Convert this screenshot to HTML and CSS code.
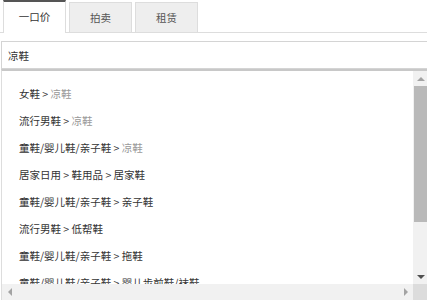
FILE: index.html
```html
<!DOCTYPE html>
<html lang="zh-CN">
<head>
    <meta charset="UTF-8">
    <meta name="viewport" content="width=device-width, initial-scale=1.0">
    <title>商品类目搜索</title>
    <link rel="stylesheet" href="styles.css">
</head>
<body>
    <!-- Sale type tabs -->
    <div class="tabs">
        <div class="tab active">一口价</div>
        <div class="tab">拍卖</div>
        <div class="tab">租赁</div>
    </div>

    <!-- Search box with suggestion list -->
    <div class="search">
        <input type="text" class="search-input" value="凉鞋">
        <div class="suggest-box">
            <ul class="suggest">
                <li>女鞋 &gt; <span class="hit">凉鞋</span></li>
                <li>流行男鞋 &gt; <span class="hit">凉鞋</span></li>
                <li>童鞋/婴儿鞋/亲子鞋 &gt; <span class="hit">凉鞋</span></li>
                <li>居家日用 &gt; 鞋用品 &gt; 居家鞋</li>
                <li>童鞋/婴儿鞋/亲子鞋 &gt; 亲子鞋</li>
                <li>流行男鞋 &gt; 低帮鞋</li>
                <li>童鞋/婴儿鞋/亲子鞋 &gt; 拖鞋</li>
                <li>童鞋/婴儿鞋/亲子鞋 &gt; 婴儿步前鞋/袜鞋</li>
                <li>女鞋 &gt; 拖鞋</li>
                <li>运动鞋new &gt; 运动凉鞋</li>
            </ul>
            <!-- fake scrollbars -->
            <div class="vbar">
                <div class="arrow up"></div>
                <div class="track"><div class="thumb"></div></div>
                <div class="arrow down"></div>
            </div>
            <div class="hbar">
                <div class="arrow left"></div>
                <div class="arrow right"></div>
            </div>
            <div class="corner"></div>
        </div>
    </div>
</body>
</html>
```
FILE: styles.css
```css
/* Page base */
body {
    margin: 0;
    font-family: "Noto Sans CJK SC", "Liberation Sans", sans-serif;
    font-size: 10.5px;
    color: #333;
    background: #fff;
    overflow: hidden;
}

.tabs {
    display: flex;
    padding-left: 3px;
    border-bottom: 1px solid #ddd;
    height: 32px;
}

.tab {
    width: 61px;
    margin-right: 3px;
    margin-top: 2px;
    border: 1px solid #ddd;
    border-bottom: none;
    background: #eee;
    color: #555;
    text-align: center;
    line-height: 29px;
}

.tab.active {
    margin-top: 0;
    border-top: 2px solid #555;
    background: #fff;
    color: #333;
    height: 31px;
    margin-bottom: -1px;
}

.search {
    margin-top: 8px;
    margin-left: 1px;
    width: 430px;
}

.search-input {
    display: block;
    box-sizing: border-box;
    width: 100%;
    height: 28px;
    margin: 0;
    padding: 0 6px;
    border: 1px solid #d4d4d4;
    font-family: inherit;
    font-size: 10.5px;
    color: #333;
    outline: none;
}

.suggest-box {
    display: grid;
    grid-template-columns: 411px 15px;
    grid-template-rows: 213px 17px;
    border-left: 1px solid #ddd;
    border-top: 2px solid #c8c8c8;
}

.suggest {
    list-style: none;
    margin: 0;
    padding: 9px 0 0 0;
    overflow: hidden;
}

.suggest li {
    padding-left: 17px;
    height: 27px;
    line-height: 27px;
    white-space: nowrap;
}

.hit {
    color: #999;
}

/* scrollbars */
.vbar {
    display: flex;
    flex-direction: column;
    background: #f1f1f1;
}

.vbar .track {
    flex: 1;
}

.vbar .thumb {
    height: 136px;
    margin: 0 1px;
    background: #b9b9b9;
}

.hbar {
    display: flex;
    justify-content: space-between;
    background: #f1f1f1;
}

.corner {
    background: #dcdcdc;
}

.arrow {
    width: 15px;
    height: 15px;
    position: relative;
}

.arrow::after {
    content: "";
    position: absolute;
    left: 50%;
    top: 50%;
    width: 0;
    height: 0;
    border: 4px solid transparent;
}

.arrow.up::after {
    margin: -6px 0 0 -4px;
    border-bottom-color: #a3a3a3;
}

.arrow.down::after {
    margin: -2px 0 0 -4px;
    border-top-color: #505050;
}

.arrow.left::after {
    margin: -4px 0 0 -6px;
    border-right-color: #a3a3a3;
}

.arrow.right::after {
    margin: -4px 0 0 -2px;
    border-left-color: #a3a3a3;
}
```
